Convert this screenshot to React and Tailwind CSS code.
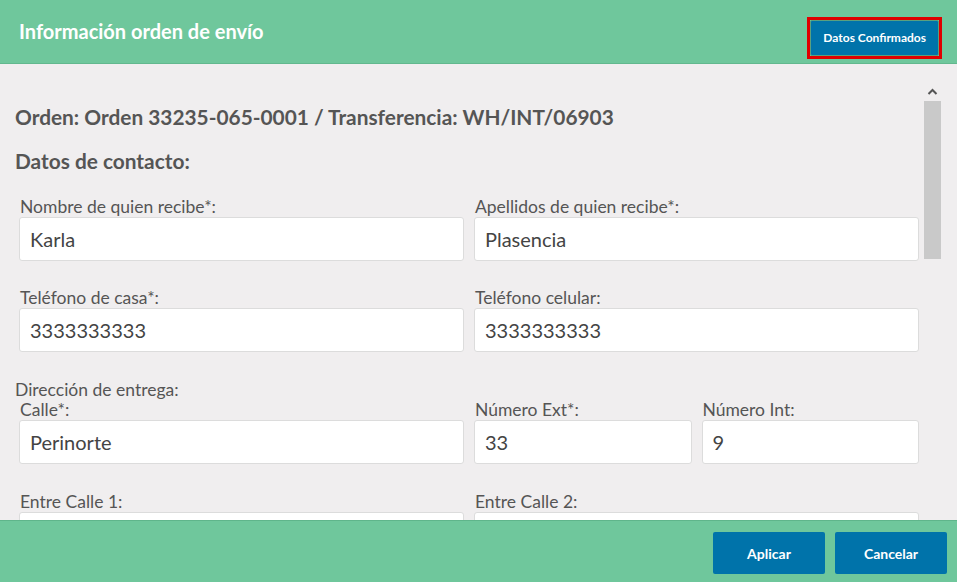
import React from "react";

function Field({ label, value, className = "" }) {
  return (
    <div className={"flex flex-col " + className}>
      <label className="text-[17.5px] leading-[20px] h-[20px] text-[#555] pl-px">{label}</label>
      <div className="h-[44px] bg-white border border-[#dcdcdc] rounded-[3px] flex items-center pl-[10px] text-[20px] text-[#444]">
        {value}
      </div>
    </div>
  );
}

export default function App() {
  return (
    <div className="w-[957px] h-[582px] flex flex-col bg-[#f0eeef] font-['Lato','Noto_Sans',sans-serif] overflow-hidden">
      <header className="h-[64px] shrink-0 bg-[#6fc79c] border-b border-[#62b88e] flex items-center justify-between pl-[19px] pr-[15px]">
        <h1 className="text-[20px] font-bold text-white pb-[2px]">Información orden de envío</h1>
        <div className="border-[3px] border-[#e00000] mt-[12px] p-0">
          <button className="h-[36px] px-[12px] bg-[#0073aa] border border-[#5aa07f] rounded-[2px] text-white text-[12px] font-bold">
            Datos Confirmados
          </button>
        </div>
      </header>
      <div className="flex-1 flex min-h-0">
        <main className="flex-1 min-w-0 overflow-hidden pl-[15px] pr-[5px] pt-[40px]">
          <h2 className="text-[20.85px] font-bold text-[#555] leading-[26px]">Orden: Orden 33235-065-0001 / Transferencia: WH/INT/06903</h2>
          <h2 className="text-[20.85px] font-bold text-[#555] leading-[26px] mt-[18px]">Datos de contacto:</h2>
          <div className="grid grid-cols-2 gap-x-[10px] gap-y-[27px] pl-[4px] mt-[23px]">
            <Field label="Nombre de quien recibe*:" value="Karla" />
            <Field label="Apellidos de quien recibe*:" value="Plasencia" />
            <Field label="Teléfono de casa*:" value="3333333333" />
            <Field label="Teléfono celular:" value="3333333333" />
          </div>
          <div className="text-[17.5px] leading-[20px] text-[#555] mt-[28px]">Dirección de entrega:</div>
          <div className="grid grid-cols-4 gap-x-[10px] gap-y-[28px] pl-[4px]">
            <Field className="col-span-2" label="Calle*:" value="Perinorte" />
            <Field label="Número Ext*:" value="33" />
            <Field label="Número Int:" value="9" />
            <Field className="col-span-2" label="Entre Calle 1:" value="" />
            <Field className="col-span-2" label="Entre Calle 2:" value="" />
          </div>
        </main>
        <aside className="w-[33px] shrink-0 flex flex-col items-start pt-[22px]">
          <svg width="17" height="12" viewBox="0 0 17 12" className="mb-[3px]">
            <path d="M4.5 8 L8.5 4 L12.5 8" stroke="#555" strokeWidth="2" fill="none" />
          </svg>
          <div className="w-[17px] h-[158px] bg-[#c9c9c9]" />
        </aside>
      </div>
      <footer className="h-[62px] shrink-0 bg-[#6fc79c] border-t border-[#5fb58b] flex items-start justify-end gap-[10px] pr-[10px] pt-[11px]">
        <button className="w-[112px] h-[42px] bg-[#0073aa] rounded-[2px] text-white text-[14px] font-bold">Aplicar</button>
        <button className="w-[112px] h-[42px] bg-[#0073aa] rounded-[2px] text-white text-[14px] font-bold">Cancelar</button>
      </footer>
    </div>
  );
}
